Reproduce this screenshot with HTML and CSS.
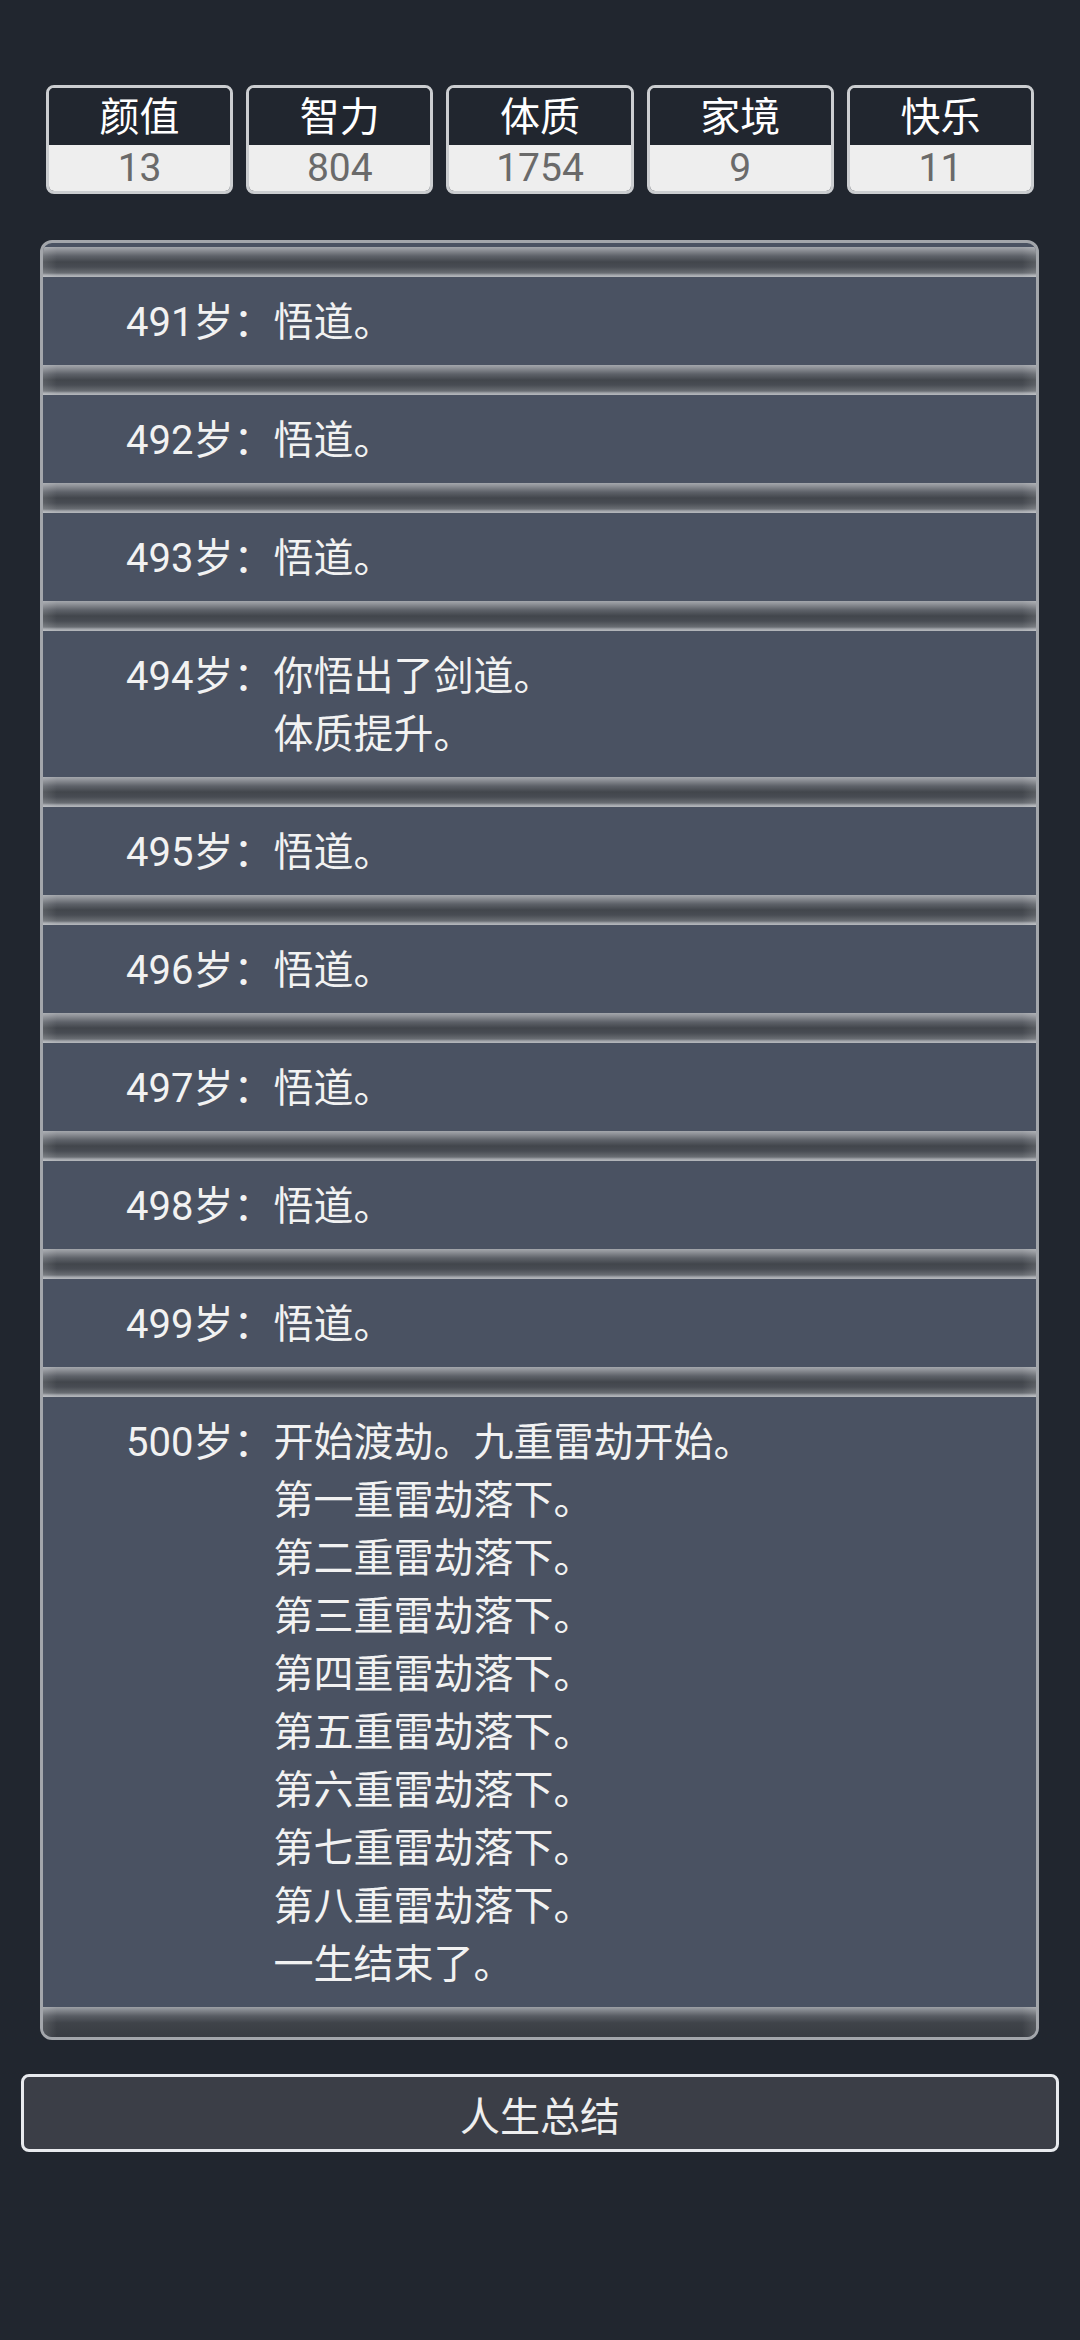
FILE: index.html
```html
<!DOCTYPE html>
<html lang="zh-CN">
  <head>
    <meta charset="UTF-8" />
    <meta name="viewport" content="width=device-width, initial-scale=1.0" />
    <title>人生重开</title>
    <link rel="stylesheet" href="styles.css">
  </head>
  <body>
    <!-- Stats -->
    <ul class="stats">
      <li class="stat"><div class="label">颜值</div><div class="value">13</div></li>
      <li class="stat"><div class="label">智力</div><div class="value">804</div></li>
      <li class="stat"><div class="label">体质</div><div class="value">1754</div></li>
      <li class="stat"><div class="label">家境</div><div class="value">9</div></li>
      <li class="stat"><div class="label">快乐</div><div class="value">11</div></li>
    </ul>

    <!-- Life log -->
    <div class="log">
      <div class="bar"></div>
      <div class="event"><span class="age">491岁：</span><div class="text">悟道。</div></div>
      <div class="bar"></div>
      <div class="event"><span class="age">492岁：</span><div class="text">悟道。</div></div>
      <div class="bar"></div>
      <div class="event"><span class="age">493岁：</span><div class="text">悟道。</div></div>
      <div class="bar"></div>
      <div class="event">
        <span class="age">494岁：</span>
        <div class="text">你悟出了剑道。<br />体质提升。</div>
      </div>
      <div class="bar"></div>
      <div class="event"><span class="age">495岁：</span><div class="text">悟道。</div></div>
      <div class="bar"></div>
      <div class="event"><span class="age">496岁：</span><div class="text">悟道。</div></div>
      <div class="bar"></div>
      <div class="event"><span class="age">497岁：</span><div class="text">悟道。</div></div>
      <div class="bar"></div>
      <div class="event"><span class="age">498岁：</span><div class="text">悟道。</div></div>
      <div class="bar"></div>
      <div class="event"><span class="age">499岁：</span><div class="text">悟道。</div></div>
      <div class="bar"></div>
      <div class="event">
        <span class="age">500岁：</span>
        <div class="text">
          开始渡劫。九重雷劫开始。<br />
          第一重雷劫落下。<br />
          第二重雷劫落下。<br />
          第三重雷劫落下。<br />
          第四重雷劫落下。<br />
          第五重雷劫落下。<br />
          第六重雷劫落下。<br />
          第七重雷劫落下。<br />
          第八重雷劫落下。<br />
          一生结束了。
        </div>
      </div>
      <div class="bar last"></div>
    </div>

    <button class="summary">人生总结</button>
  </body>
</html>
```

FILE: styles.css
```css
* {
  margin: 0;
  padding: 0;
  box-sizing: border-box;
}

html,
body {
  background-color: #21262f;
  font-family: Roboto, "Noto Sans CJK SC", sans-serif;
  color: #f2f2f2;
}

body {
  padding-bottom: 188px;
}

/* stats row */
.stats {
  list-style: none;
  display: grid;
  grid-template-columns: repeat(5, 1fr);
  gap: 13px;
  margin: 85px 46px 0 46px;
}

.stat {
  border: 3px solid #cbcdd0;
  border-radius: 8px;
  overflow: hidden;
  text-align: center;
}

.stat .label {
  height: 57px;
  line-height: 60px;
  font-size: 40px;
  color: #fff;
  background: #21262f;
}

.stat .value {
  height: 46px;
  line-height: 47px;
  font-size: 39px;
  color: #6a6a6a;
  background: #eeeeee;
}

/* log panel */
.log {
  margin: 46px 41px 0 40px;
  border: 3px solid #a3a6ab;
  border-radius: 12px;
  overflow: hidden;
  background: #4a5262;
  padding-top: 4px;
}

.bar {
  position: relative;
  height: 30px;
  background: linear-gradient(
    to bottom,
    #a4a7ac 0,
    #8e9197 3px,
    #5e6269 9px,
    #42464c 15px,
    #484c53 20px,
    #696d73 26px,
    #a2a5aa 28px,
    #b6b9bd 30px
  );
}

.bar::after {
  content: "";
  position: absolute;
  top: 0;
  left: 0;
  right: 0;
  bottom: 0;
  background: linear-gradient(
    to right,
    rgba(255, 255, 255, 0.12),
    rgba(255, 255, 255, 0) 14px,
    rgba(255, 255, 255, 0) calc(100% - 14px),
    rgba(255, 255, 255, 0.12)
  );
}

.bar.last {
  background: linear-gradient(
    to bottom,
    #9da0a5 0,
    #85898f 3px,
    #585c63 9px,
    #3f4349 16px,
    #393c43 30px
  );
}

.event {
  display: flex;
  padding: 17px 0 13px 83px;
  font-size: 40px;
  line-height: 58px;
  color: #f2f2f2;
}

.event .age {
  flex: none;
}

/* summary button */
.summary {
  display: block;
  width: calc(100% - 42px);
  height: 78px;
  margin: 34px 21px 0;
  border: 3px solid #e8eaee;
  border-radius: 8px;
  background: #3b3e47;
  color: #eeeeee;
  font-family: Roboto, "Noto Sans CJK SC", sans-serif;
  font-size: 40px;
  padding-top: 2px;
  cursor: pointer;
}
```
